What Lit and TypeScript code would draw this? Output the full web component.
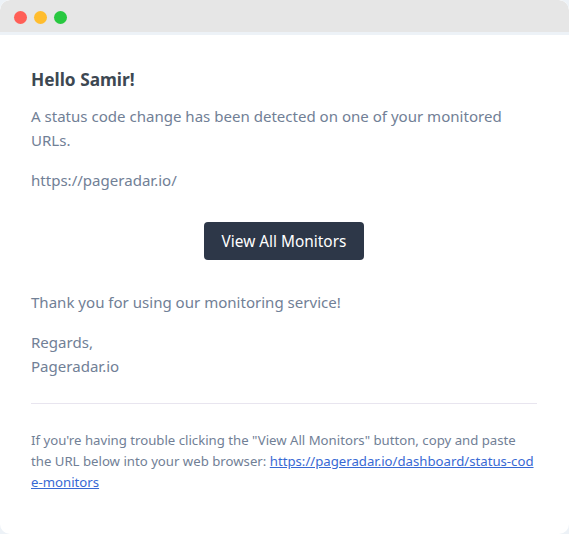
import { LitElement, html, css } from "lit";
import { customElement } from "lit/decorators.js";

@customElement("app-root")
export class AppRoot extends LitElement {
  static styles = css`
    :host { display: block; width: 569px; height: 534px; background: #edf2f7; font-family: "Noto Sans", "Open Sans", sans-serif; overflow: hidden; }
    .window { height: 534px; display: flex; flex-direction: column; background: #fff; border-radius: 10px; overflow: hidden; box-sizing: border-box; }
    .bar { flex: none; height: 32px; box-sizing: border-box; padding: 2px 0 0 13.5px; background: #e6e6e6; display: flex; align-items: center; gap: 7px; border-radius: 10px 10px 0 0; }
    .stripe { flex: none; height: 3px; background: #edf2f7; }
    .dot { width: 13px; height: 13px; border-radius: 50%; }
    .r { background: #ff5f57; } .y { background: #ffbd2e; } .g { background: #28c840; }
    .body { padding: 31px 32px 0 31px; color: #718096; font-size: 15.05px; line-height: 24px; }
    h1 { margin: 0 0 11px; font-size: 17.3px; line-height: 27px; font-weight: 700; color: #3d4852; }
    p { margin: 0 0 16px; }
    .center { display: flex; justify-content: center; margin: 30px 0 30px; }
    .btn { background: #2d3748; color: #fff; border-radius: 4px; padding: 8px 18px 6px; font-size: 15.4px; text-decoration: none; }
    hr { border: 0; border-top: 1px solid #e8e5ef; margin: 25px 0 26px; }
    .small { font-size: 13.2px; line-height: 21px; margin: 0; }
    a.link { color: #3869d4; word-break: break-all; }
  `;
  render() {
    return html`<div class="window">
      <div class="bar"><span class="dot r"></span><span class="dot y"></span><span class="dot g"></span></div>
      <div class="stripe"></div>
      <div class="body">
        <h1>Hello Samir!</h1>
        <p>A status code change has been detected on one of your monitored URLs.</p>
        <p>https://pageradar.io/</p>
        <div class="center"><a class="btn" href="#">View All Monitors</a></div>
        <p>Thank you for using our monitoring service!</p>
        <p>Regards,<br />Pageradar.io</p>
        <hr />
        <p class="small">If you're having trouble clicking the "View All Monitors" button, copy and paste the URL below into your web browser: <a class="link" href="#">https://pageradar.io/dashboard/status-code-monitors</a></p>
      </div>
    </div>`;
  }
}
